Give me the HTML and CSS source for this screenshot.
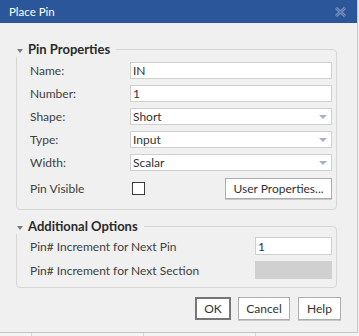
FILE: index.html
```html
<!DOCTYPE html>
<html>
<head>
<meta charset="utf-8">
<link rel="stylesheet" href="styles.css">
</head>
<body>
<div class="dialog">
  <div class="titlebar">
    <span class="title">Place Pin</span>
    <svg class="close" width="11" height="10" viewBox="0 0 11 10">
      <path d="M1 1 L10 9 M10 1 L1 9" stroke="#7d93bd" stroke-width="3" fill="none"/>
      <path d="M1 1 L10 9 M10 1 L1 9" stroke="#4468a8" stroke-width="1" fill="none"/>
    </svg>
  </div>
  <div class="body">
    <div class="group g1">
      <div class="group-head"><span class="tri"></span><span class="legend">Pin Properties</span></div>
      <div class="rows">
        <label class="lbl">Name:</label><div class="field">IN</div>
        <label class="lbl">Number:</label><div class="field">1</div>
        <label class="lbl">Shape:</label><div class="field select">Short<span class="arrow"></span></div>
        <label class="lbl">Type:</label><div class="field select">Input<span class="arrow"></span></div>
        <label class="lbl">Width:</label><div class="field select">Scalar<span class="arrow"></span></div>
      </div>
      <div class="visible-row">
        <span class="lbl">Pin Visible</span>
        <div class="visible-ctrl">
          <span class="checkbox"></span>
          <button class="btn userprops">User Properties...</button>
        </div>
      </div>
    </div>
    <div class="group g2">
      <div class="group-head"><span class="tri"></span><span class="legend">Additional Options</span></div>
      <div class="rows2">
        <label class="lbl">Pin# Increment for Next Pin</label><div class="field tall">1</div>
        <label class="lbl">Pin# Increment for Next Section</label><div class="field tall disabled"></div>
      </div>
    </div>
    <div class="buttons">
      <button class="btn ok">OK</button>
      <button class="btn">Cancel</button>
      <button class="btn">Help</button>
    </div>
  </div>
</div>
<div class="below">
  <span class="cell c1"></span><span class="cell c2"></span><span class="cell c3"></span><span class="cell c4"></span>
</div>
</body>
</html>
```

FILE: styles.css
```css
html, body {
  margin: 0;
  padding: 0;
  background: #f0f0f0;
  font-family: Lato, "Liberation Sans", sans-serif;
  font-size: 12px;
  color: #3a3a3a;
}
.dialog {
  width: 357px;
  height: 332px;
  border-right: 1px solid #c9c9c9;
  border-bottom: 1px solid #c4c4c4;
  background: #f0f0f0;
  display: flex;
  flex-direction: column;
}
.titlebar {
  height: 23px;
  flex: none;
  background: #2b579a;
  display: flex;
  align-items: center;
  justify-content: space-between;
  padding: 0 11px 0 9px;
}
.title {
  color: #ffffff;
  font-size: 11.5px;
}
.close {
  display: block;
  margin-top: 1px;
}
.body {
  padding: 26px 16px 0 16px;
  display: flex;
  flex-direction: column;
}
.group {
  width: 321px;
  box-sizing: border-box;
  border: 1px solid #d6d6d6;
  border-radius: 4px;
  padding: 0 4px 10px 13px;
}
.group-head {
  height: 17px;
  margin: -10px 0 0 -14px;
  width: fit-content;
  background: #f0f0f0;
  display: flex;
  align-items: center;
  padding-right: 6px;
}
.tri {
  width: 0;
  height: 0;
  border-left: 3.5px solid transparent;
  border-right: 3.5px solid transparent;
  border-top: 4px solid #7a7a7a;
  align-self: flex-end;
  margin: 0 5px 4px 1px;
}
.legend {
  font-weight: bold;
  font-size: 13px;
  color: #2a2a2a;
}
.rows {
  margin-top: 5px;
  display: grid;
  grid-template-columns: 100px 1fr;
  grid-auto-rows: 17px;
  row-gap: 6px;
  align-items: center;
}
.lbl {
  color: #404040;
  white-space: nowrap;
}
.field {
  height: 17px;
  box-sizing: border-box;
  background: #ffffff;
  border: 1px solid #d0d0d0;
  padding-left: 2px;
  display: flex;
  align-items: center;
  justify-content: space-between;
  color: #333333;
}
.field.tall {
  height: 18px;
}
.field.disabled {
  background: #d0d0d0;
  border-color: #d0d0d0;
}
.arrow {
  width: 0;
  height: 0;
  border-left: 4px solid transparent;
  border-right: 4px solid transparent;
  border-top: 4px solid #a3b2ca;
  margin-right: 4px;
}
.visible-row {
  margin-top: 7px;
  display: grid;
  grid-template-columns: 100px 1fr;
  align-items: center;
  height: 21px;
}
.visible-ctrl {
  display: flex;
  align-items: center;
  justify-content: space-between;
}
.checkbox {
  width: 13px;
  height: 13px;
  box-sizing: border-box;
  border: 1px solid #3c3c3c;
  background: #ffffff;
  margin-left: 2px;
}
.btn {
  font-family: Lato, "Liberation Sans", sans-serif;
  font-size: 12px;
  color: #333333;
  background: #ffffff;
  border: 1px solid #adadad;
  box-shadow: 0 1px 0 #c8c8c8;
  padding: 0;
  margin: 0;
  height: 23px;
}
.userprops {
  width: 107px;
  height: 21px;
}
.g2 {
  margin-top: 16px;
  padding-bottom: 8px;
}
.rows2 {
  margin-top: 3px;
  display: grid;
  grid-template-columns: 225px 1fr;
  grid-auto-rows: 18px;
  row-gap: 6px;
  align-items: center;
}
.buttons {
  margin-top: 9px;
  display: flex;
  justify-content: flex-end;
  gap: 7px;
}
.buttons .btn {
  width: 52px;
}
.buttons .btn.ok {
  width: 36px;
  border: 2px solid #767676;
  box-shadow: none;
}
.buttons .btn:last-child {
  width: 43px;
  margin-left: 1px;
}
.below {
  height: 3px;
  display: flex;
  background: #f3f3f3;
}
.cell {
  border-right: 1px solid #d8d8d8;
}
.c1 { width: 31px; }
.c2 { width: 111px; }
.c3 { width: 111px; }
.c4 { flex: 1; border-right: none; }
```
